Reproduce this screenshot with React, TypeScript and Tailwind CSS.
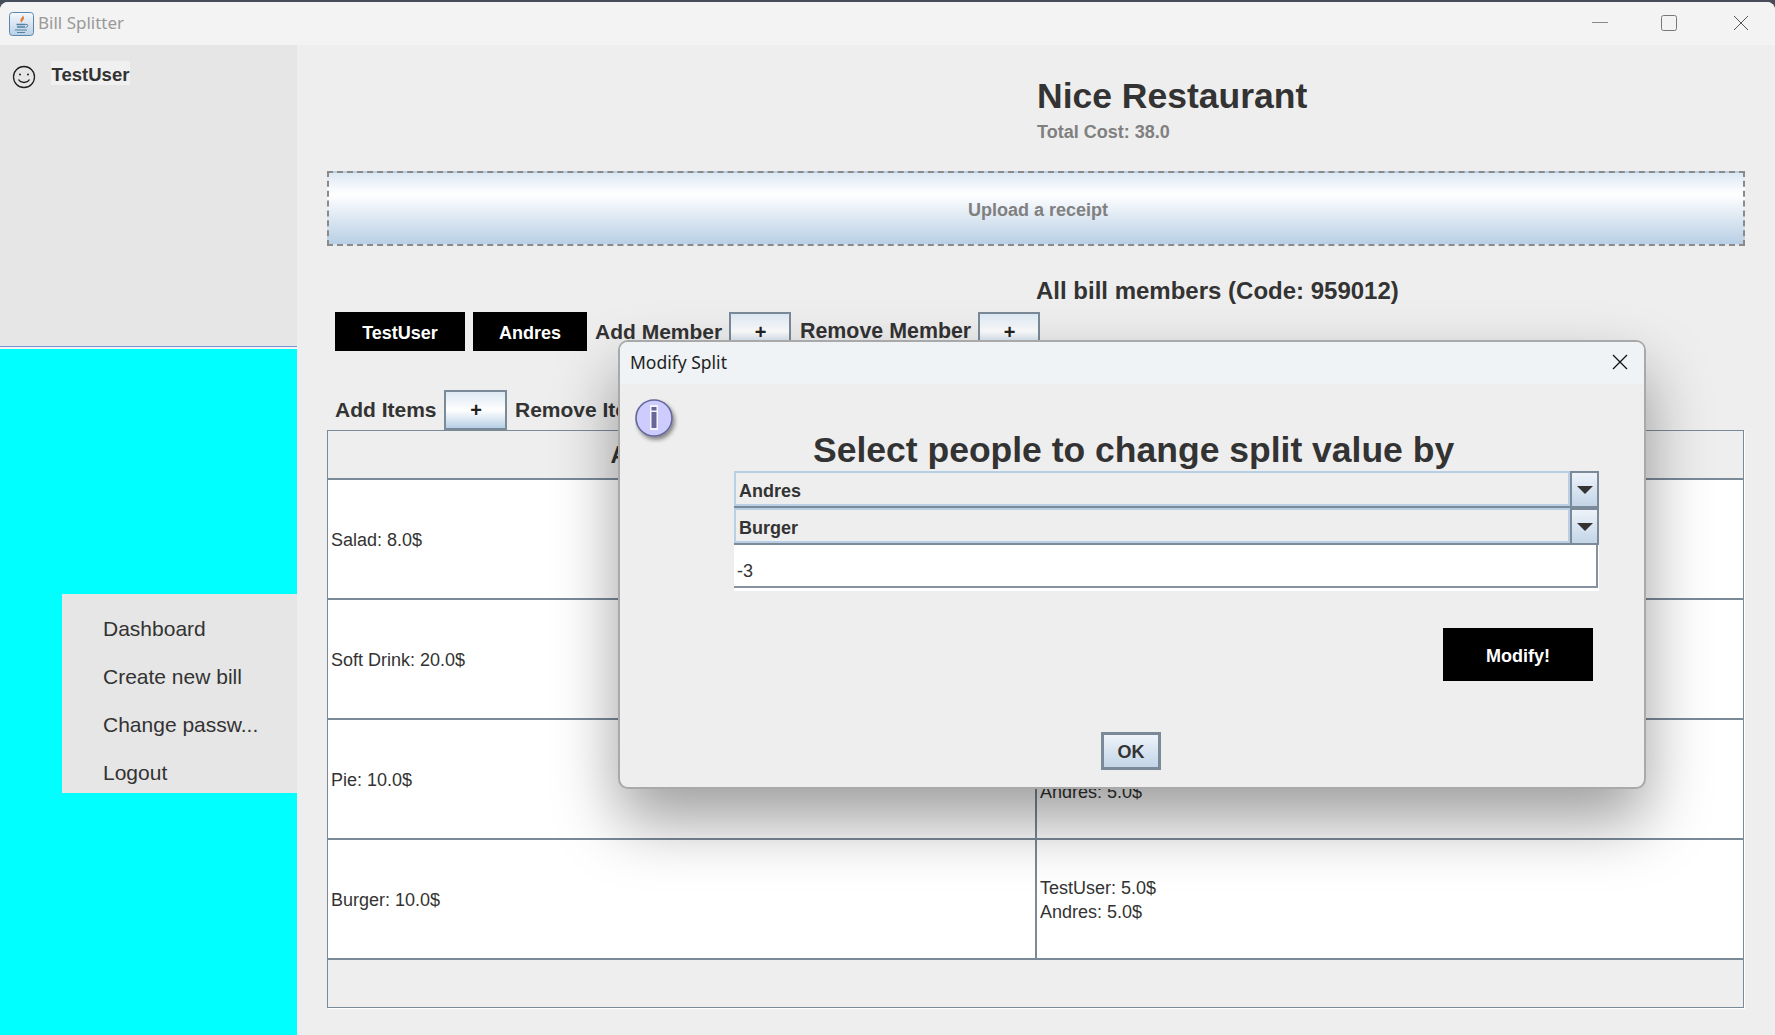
const rows = [
  { item: "Salad: 8.0$", split: ["TestUser: 4.0$", "Andres: 4.0$"] },
  { item: "Soft Drink: 20.0$", split: ["TestUser: 10.0$", "Andres: 10.0$"] },
  { item: "Pie: 10.0$", split: ["TestUser: 5.0$", "Andres: 5.0$"] },
  { item: "Burger: 10.0$", split: ["TestUser: 5.0$", "Andres: 5.0$"] },
];

const menuItems = ["Dashboard", "Create new bill", "Change passw...", "Logout"];

const JavaIcon = () => (
  <svg width="25" height="24" viewBox="0 0 25 24" className="ml-[9px] shrink-0">
    <defs>
      <linearGradient id="java-bg" x1="0" y1="0" x2="0" y2="1">
        <stop offset="0" stopColor="#f4f8fc" />
        <stop offset="1" stopColor="#b9d0e6" />
      </linearGradient>
    </defs>
    <rect x="0.5" y="0.5" width="24" height="23" rx="3" fill="url(#java-bg)" stroke="#5c87ad" />
    <path d="M13.5 3c1 2-2.500 3.500-2 6 .2 1 .8 1.400 1.200 1.800-.3-1.500 2.600-3 2.300-5-.2-1-.8-2-1.500-2.800z" fill="#e8762b" />
    <path d="M7.500 12.500h9M8 15h8" stroke="#5382a1" strokeWidth="1.300" />
    <path d="M16.500 12.500h1.500c1.300 0 1.300 2.500-1.500 3" fill="none" stroke="#5382a1" />
    <path d="M6 18h12M8 20.500h8" stroke="#5382a1" strokeWidth="1.200" />
  </svg>
);

const SmileIcon = () => (
  <svg width="24" height="24" viewBox="0 0 24 24" fill="none" stroke="#222" strokeWidth="1.300" className="shrink-0">
    <circle cx="12" cy="12" r="10.500" />
    <circle cx="8" cy="9.500" r="1" fill="#222" stroke="none" />
    <circle cx="16" cy="9.500" r="1" fill="#222" stroke="none" />
    <path d="M6.500 14.500c2.500 4 8.500 4 11 0" />
  </svg>
);

const InfoIcon = () => (
  <svg width="44" height="44" viewBox="0 0 44 44" className="shrink-0">
    <defs>
      <filter id="info-shadow" x="-20%" y="-20%" width="150%" height="150%">
        <feDropShadow dx="2" dy="3" stdDeviation="2" floodColor="#000" floodOpacity="0.45" />
      </filter>
    </defs>
    <circle cx="19" cy="19" r="18" fill="#ccccff" stroke="#666699" strokeWidth="1.600" filter="url(#info-shadow)" />
    <rect x="15" y="6" width="8" height="25" fill="#f4f4ff" />
    <rect x="16.500" y="8" width="5" height="3.500" fill="#666699" />
    <rect x="16.500" y="13" width="5" height="16" fill="#666699" />
  </svg>
);

const PlusButton = ({ className }: { className: string }) => (
  <button
    type="button"
    className={`flex shrink-0 items-center justify-center border-2 border-[#7a8a99] bg-gradient-to-b from-[#dde8f3] via-white to-[#b8cfe5] pl-[1px] text-[20px] font-bold text-[#222] ${className}`}
  >
    +
  </button>
);

const Combo = ({ value }: { value: string }) => (
  <div className="flex h-[37px] border-b-2 border-[#7a8a99]">
    <div className="flex flex-1 items-center border-2 border-[#b8cfe5] bg-[#eeeeee] pl-[3px] pt-[5px] text-[18px] font-bold text-[#333]">
      {value}
    </div>
    <div className="flex w-[29px] items-center justify-center border-x-2 border-t-2 border-[#7a8a99] bg-gradient-to-b from-[#eef3f9] to-[#c3d5e8]">
      <div className="h-0 w-0 border-x-[8px] border-t-[8px] border-x-transparent border-t-[#333]" />
    </div>
  </div>
);

export default function App() {
  return (
    <div className="relative h-[1035px] w-[1775px] overflow-hidden bg-[#474c59] pt-[2px] font-['Liberation_Sans',Arial,sans-serif]">
      <div className="flex h-full flex-col overflow-hidden rounded-t-lg bg-[#eeeeee]">
        {/* Window title bar */}
        <div className="flex h-[43px] shrink-0 items-center bg-[#f3f3f3]">
          <JavaIcon />
          <span className="ml-[4px] mb-[2px] font-['Noto_Sans',sans-serif] text-[17px] text-[#999]">Bill Splitter</span>
          <div className="ml-auto mb-[2px] flex items-center">
            <svg width="16" height="2" className="mr-[53px]">
              <rect width="16" height="1" fill="#888" />
            </svg>
            <svg width="16" height="16" fill="none" className="mr-[56px]">
              <rect x="0.5" y="0.5" width="15" height="15" rx="2" stroke="#777" />
            </svg>
            <svg width="16" height="16" fill="none" stroke="#555" className="mr-[26px]">
              <path d="M1 1l14 14M15 1L1 15" />
            </svg>
          </div>
        </div>

        <div className="flex min-h-0 flex-1">
          {/* Sidebar */}
          <aside className="flex w-[297px] shrink-0 flex-col bg-[#e6e6e6]">
            <div className="flex h-[302px] shrink-0 items-start gap-[15px] border-b border-[#7594d8] pl-[12px] pt-[16px]">
              <div className="mt-[4px]">
                <SmileIcon />
              </div>
              <span className="flex h-[24px] w-[79px] items-center justify-center whitespace-nowrap bg-[#f0f0f0] pt-[3px] text-[18.5px] font-bold text-[#333]">
                TestUser
              </span>
            </div>
            <div className="h-[2px] shrink-0 bg-[#f3f3f3]" />
            <div className="flex-1 bg-[#00ffff] pt-[245px]">
              <nav className="ml-[62px] flex h-[199px] flex-col overflow-hidden bg-[#e6e6e6] pl-[41px] pt-[11px]">
                {menuItems.map((label) => (
                  <span key={label} className="flex h-[48px] shrink-0 items-center text-[21px] text-[#333]">
                    {label}
                  </span>
                ))}
              </nav>
            </div>
          </aside>

          {/* Bill content */}
          <main className="min-w-0 flex-1 pl-[30px] pr-[30px] pt-[31px]">
            <h1 className="ml-[710px] h-[40px] text-[35.5px] leading-[40px] font-bold text-[#333]">Nice Restaurant</h1>
            <p className="ml-[710px] mt-[5px] h-[22px] text-[18px] leading-[22px] font-bold text-[#808080]">
              Total Cost: 38.0
            </p>
            <div className="mt-[28px] flex h-[75px] items-center justify-center border-2 border-dashed border-[#8a8a8a] bg-gradient-to-b from-[#dde8f3] via-white via-30% to-[#b8cfe5] pl-[4px] pt-[3px] text-[18px] font-bold text-[#808080]">
              Upload a receipt
            </div>
            <h2 className="ml-[709px] mt-[31px] h-[28px] text-[24px] leading-[28px] font-bold text-[#333]">
              All bill members (Code: 959012)
            </h2>

            <div className="ml-[8px] mt-[7px] flex h-[39px] items-center gap-[8px] text-[21px] font-bold text-[#333]">
              <button type="button" className="h-full w-[130px] bg-black pt-[3px] text-[18px] font-bold text-white">
                TestUser
              </button>
              <button type="button" className="h-full w-[114px] bg-black pt-[3px] text-[18px] font-bold text-white">
                Andres
              </button>
              <span className="w-[126px] shrink-0 whitespace-nowrap">Add Member</span>
              <PlusButton className="h-full w-[62px]" />
              <span className="ml-[1px] w-[170px] shrink-0 whitespace-nowrap text-[21.4px]">Remove Member</span>
              <PlusButton className="h-full w-[62px]" />
            </div>

            <div className="ml-[8px] mt-[39px] flex h-[40px] items-center gap-[8px] text-[21px] font-bold text-[#333]">
              <span className="w-[101px] shrink-0 whitespace-nowrap">Add Items</span>
              <PlusButton className="h-full w-[63px]" />
              <span className="w-[145px] shrink-0 whitespace-nowrap">Remove Items</span>
              <PlusButton className="h-full w-[63px]" />
            </div>

            {/* Items table */}
            <div className="mr-[1px] h-[578px] border border-[#7a8a99] bg-[#eeeeee] text-[18px] text-[#333] shadow-[1px_1px_0_#ffffff]">
              <div className="grid h-[49px] grid-cols-[709px_1fr] border-b-2 border-[#7a8a99] text-center text-[24px] font-bold">
                <div className="flex items-center justify-center">All Bill Items</div>
                <div className="flex items-center justify-center">Split</div>
              </div>
              {rows.map((row) => (
                <div key={row.item} className="grid h-[120px] grid-cols-[709px_1fr] border-b-2 border-[#7a8a99] bg-white">
                  <div className="flex items-center border-r-2 border-[#7a8a99] pl-[3px] pt-[2px]">{row.item}</div>
                  <div className="flex flex-col justify-center pl-[3px] pt-[2px] leading-[24px]">
                    {row.split.map((line) => (
                      <span key={line}>{line}</span>
                    ))}
                  </div>
                </div>
              ))}
            </div>
          </main>
        </div>
      </div>

      {/* Modify Split dialog */}
      <div className="absolute left-[618px] top-[340px] flex h-[449px] w-[1028px] flex-col overflow-hidden rounded-[10px] border-2 border-[#a9a9a9] bg-[#eeeeee] shadow-[0_32px_64px_rgba(0,0,0,0.38)]">
        <div className="flex h-[42px] shrink-0 items-center justify-between bg-[#eff3f6] pb-[2px] pl-[10px] pr-[16px]">
          <span className="font-['Noto_Sans',sans-serif] text-[17.5px] text-[#222]">Modify Split</span>
          <svg width="16" height="16" fill="none" stroke="#111" strokeWidth="1.300">
            <path d="M1 1l14 14M15 1L1 15" />
          </svg>
        </div>
        <div className="flex flex-1 pl-[15px] pt-[15px]">
          <InfoIcon />
          <div className="ml-[55px] w-[865px] pt-[32px]">
            <h3 className="ml-[79px] h-[40px] whitespace-nowrap text-[35.5px] leading-[39px] font-bold text-[#333]">
              Select people to change split value by
            </h3>
            <Combo value="Andres" />
            <Combo value="Burger" />
            <div className="h-[46px] bg-white pb-[3px] pr-[1px]">
              <div className="flex h-full items-center border-b-2 border-r-2 border-[#8593a0] pl-[3px] pt-[11px] text-[18px] text-[#333]">
                -3
              </div>
            </div>
            <button type="button" className="ml-[709px] mt-[37px] block h-[53px] w-[150px] bg-black pt-[3px] text-[18px] font-bold text-white">
              Modify!
            </button>
            <button
              type="button"
              className="ml-[367px] mt-[51px] block h-[38px] w-[60px] border-[3px] border-[#7a8a99] bg-gradient-to-b from-[#eef3f9] to-[#c3d5e8] pt-[3px] text-[18px] font-bold text-[#333]"
            >
              OK
            </button>
          </div>
        </div>
      </div>
    </div>
  );
}
